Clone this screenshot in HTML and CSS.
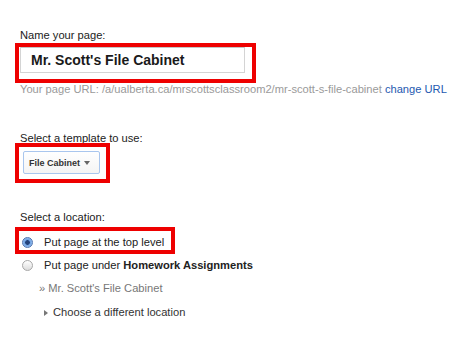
FILE: index.html
```html
<!DOCTYPE html>
<html lang="en">
<head>
  <meta charset="UTF-8" />
  <title>Create new page</title>
  <link rel="stylesheet" href="styles.css">
</head>
<body>
  <div class="page-form">

    <div class="label name-label">Name your page:</div>
    <div class="mark mark-name">
      <div class="name-input">Mr. Scott's File Cabinet</div>
    </div>
    <div class="url-line">
      Your page URL: /a/ualberta.ca/mrscottsclassroom2/mr-scott-s-file-cabinet
      <a class="link" href="#">change URL</a>
    </div>

    <div class="label template-label">Select a template to use:</div>
    <div class="mark mark-template">
      <div class="select-btn">
        <span>File Cabinet</span>
        <span class="caret"></span>
      </div>
    </div>

    <div class="label location-label">Select a location:</div>
    <div class="mark mark-location">
      <div class="option">
        <span class="radio checked"></span>
        <span>Put page at the top level</span>
      </div>
    </div>
    <div class="option option-plain">
      <span class="radio"></span>
      <span>Put page under <b>Homework Assignments</b></span>
    </div>
    <div class="crumb">» Mr. Scott's File Cabinet</div>
    <div class="choose">
      <span class="tri"></span>
      <span>Choose a different location</span>
    </div>

  </div>
</body>
</html>
```

FILE: styles.css
```css
* {
  margin: 0;
  padding: 0;
  box-sizing: border-box;
}

body {
  font-family: "Liberation Sans", Arial, sans-serif;
  font-size: 11.15px;
  color: #222;
  background: #fff;
}

.page-form {
  padding: 29px 0 0 20px;
  display: flex;
  flex-direction: column;
  align-items: flex-start;
}

.label {
  line-height: 13px;
}

.name-label {
  margin-bottom: 1px;
}

.template-label {
  margin-top: 36px;
  margin-bottom: -2px;
}

.location-label {
  margin-top: 28px;
  margin-bottom: 3px;
}

/* red highlight boxes */
.mark {
  border: 4px solid #ee0000;
  margin-left: -5px;
}

.mark-name {
  padding: 0 7px 6px 1px;
}

.mark-template {
  padding: 4px 6px 5px 4px;
}

.mark-location {
  padding: 5px 7px 1px 3px;
}

.name-input {
  width: 225px;
  height: 26px;
  border: 1px solid #d4d4d4;
  border-top-color: #c4c4c4;
  padding-left: 10px;
  display: flex;
  align-items: center;
  font-size: 14px;
  font-weight: bold;
  color: #1a1a1a;
}

.url-line {
  line-height: 13px;
  color: #9a9a9a;
}

.link {
  color: #2559b0;
  text-decoration: none;
}

.select-btn {
  width: 77px;
  height: 23px;
  border: 1px solid #a9c6ee;
  border-radius: 2px;
  background: linear-gradient(#ffffff, #f4f4f4);
  display: flex;
  align-items: center;
  padding: 0 0 0 5px;
  font-size: 9px;
  font-weight: bold;
  color: #333;
}

.caret {
  margin-left: 4px;
  border-top: 4px solid #666;
  border-left: 3px solid transparent;
  border-right: 3px solid transparent;
}

.option {
  display: flex;
  align-items: center;
  gap: 11px;
  line-height: 13px;
}

.option-plain {
  margin-left: 2px;
  line-height: 23px;
}

.radio {
  width: 11px;
  height: 11px;
  border-radius: 50%;
  border: 1px solid #a8a8a8;
  background: linear-gradient(#ffffff, #dcdcdc);
}

.radio.checked {
  border-color: #4f74b0;
  background: radial-gradient(circle, #23427a 0 2px, #6c9fe0 2.6px, #b4d3f6 100%);
}

.crumb {
  margin-left: 19px;
  line-height: 23px;
  color: #777;
}

.choose {
  margin-left: 24px;
  margin-top: 1px;
  line-height: 23px;
  display: flex;
  align-items: center;
  gap: 5px;
  color: #333;
}

.tri {
  border-left: 4px solid #777;
  border-top: 3px solid transparent;
  border-bottom: 3px solid transparent;
}
```
